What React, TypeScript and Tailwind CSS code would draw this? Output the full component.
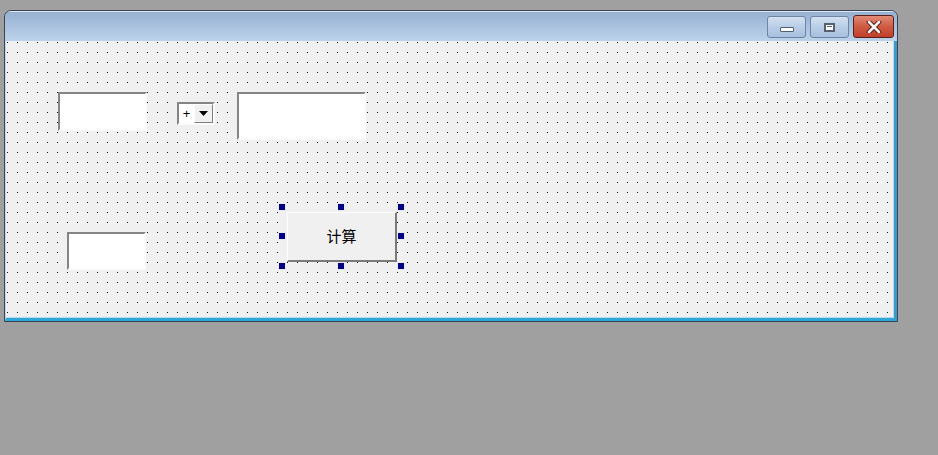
const Sunken = ({ className }: { className: string }) => (
  <div
    className={`absolute bg-white border-2 border-t-[#858585] border-l-[#858585] border-b-[#fbfbfb] border-r-[#fbfbfb] ${className}`}
  />
);

const Handle = ({ className }: { className: string }) => (
  <div className={`absolute w-[8px] h-[8px] bg-[#000080] border border-[#e8e8f8] ${className}`} />
);

const App = () => {
  return (
    <div className="w-[938px] h-[455px] bg-[#a0a0a0] pt-[10px] pl-[4px] font-['Liberation_Sans','Noto_Sans_CJK_SC',sans-serif]">
      <div className="w-[894px] h-[312px] border border-[#3b4350] rounded-t-[7px] overflow-hidden flex flex-col">
        {/* title bar */}
        <div className="h-[30px] shrink-0 bg-gradient-to-b from-[#97b1d2] to-[#bdd3eb] border-t border-[#dbe7f5] flex items-start justify-end pr-[3px] pt-[4px] gap-[4px]">
          <div className="w-[39px] h-[22px] rounded-[3px] border border-[#6d84a2] bg-gradient-to-b from-[#d3e1f1] via-[#b8cde6] to-[#a8c0de] flex items-center justify-center">
            <div className="w-[14px] h-[5px] mt-[4px] rounded-[1px] bg-white border border-[#4f5e70]" />
          </div>
          <div className="w-[39px] h-[22px] rounded-[3px] border border-[#6d84a2] bg-gradient-to-b from-[#d3e1f1] via-[#b8cde6] to-[#a8c0de] flex items-center justify-center">
            <div className="w-[11px] h-[9px] border-2 border-[#56606c] bg-white flex items-center justify-center">
              <div className="w-[5px] h-[1px] bg-[#56606c] mt-[-2px]" />
            </div>
          </div>
          <div className="w-[41px] h-[23px] mt-[-1px] rounded-[3px] border border-[#5c1e18] bg-gradient-to-b from-[#e08b78] via-[#cf5a42] to-[#c0402a] flex items-center justify-center">
            <svg width="16" height="12" viewBox="0 0 16 12">
              <path d="M3 1 L13 11 M13 1 L3 11" stroke="#4a1810" strokeWidth="4.5" strokeLinecap="round" />
              <path d="M3 1 L13 11 M13 1 L3 11" stroke="#f4f4f4" strokeWidth="2.6" strokeLinecap="round" />
            </svg>
          </div>
        </div>
        {/* client frame */}
        <div className="flex-1 border-l border-l-[#c3d7ee] border-r-[3px] border-b-[3px] border-r-[#3a9cc6] border-b-[#2ea6d6]">
          <div className="h-full border-r border-b border-[#b4dcef]">
            <div className="relative h-full bg-[#f0f0f0] bg-[image:conic-gradient(at_1px_1px,transparent_75%,#111_0)] bg-[size:10px_10px] bg-[position:1px_1px]">
              <Sunken className="left-[52px] top-[51px] w-[89px] h-[39px]" />
              <Sunken className="left-[231px] top-[51px] w-[129px] h-[48px]" />
              <Sunken className="left-[61px] top-[191px] w-[79px] h-[38px]" />

              {/* combo */}
              <div className="absolute left-[171px] top-[61px] w-[38px] h-[23px] bg-white border-2 border-t-[#858585] border-l-[#858585] border-b-[#fbfbfb] border-r-[#fbfbfb] flex items-stretch">
                <div className="w-[15px] flex items-center justify-center text-[13px] leading-none text-black">+</div>
                <div className="flex-1 bg-[#f0f0f0] border border-t-white border-l-white border-b-[#808080] border-r-[#808080] flex items-center justify-center">
                  <svg width="9" height="5" viewBox="0 0 9 5">
                    <path d="M0 0 H9 L4.5 5 Z" fill="#000" />
                  </svg>
                </div>
              </div>

              {/* button */}
              <div className="absolute left-[281px] top-[171px] w-[110px] h-[50px] bg-[#f0f0f0] border-t border-l border-white border-r-2 border-b-2 border-r-[#7a7a7a] border-b-[#7a7a7a] flex items-center justify-center">
                <span className="text-[15px] text-black font-['Noto_Sans_CJK_SC',sans-serif]">计算</span>
              </div>

              <Handle className="left-[272px] top-[162px]" />
              <Handle className="left-[331px] top-[162px]" />
              <Handle className="left-[391px] top-[162px]" />
              <Handle className="left-[272px] top-[191px]" />
              <Handle className="left-[391px] top-[191px]" />
              <Handle className="left-[272px] top-[221px]" />
              <Handle className="left-[331px] top-[221px]" />
              <Handle className="left-[391px] top-[221px]" />
            </div>
          </div>
        </div>
      </div>
    </div>
  );
};

export default App;
